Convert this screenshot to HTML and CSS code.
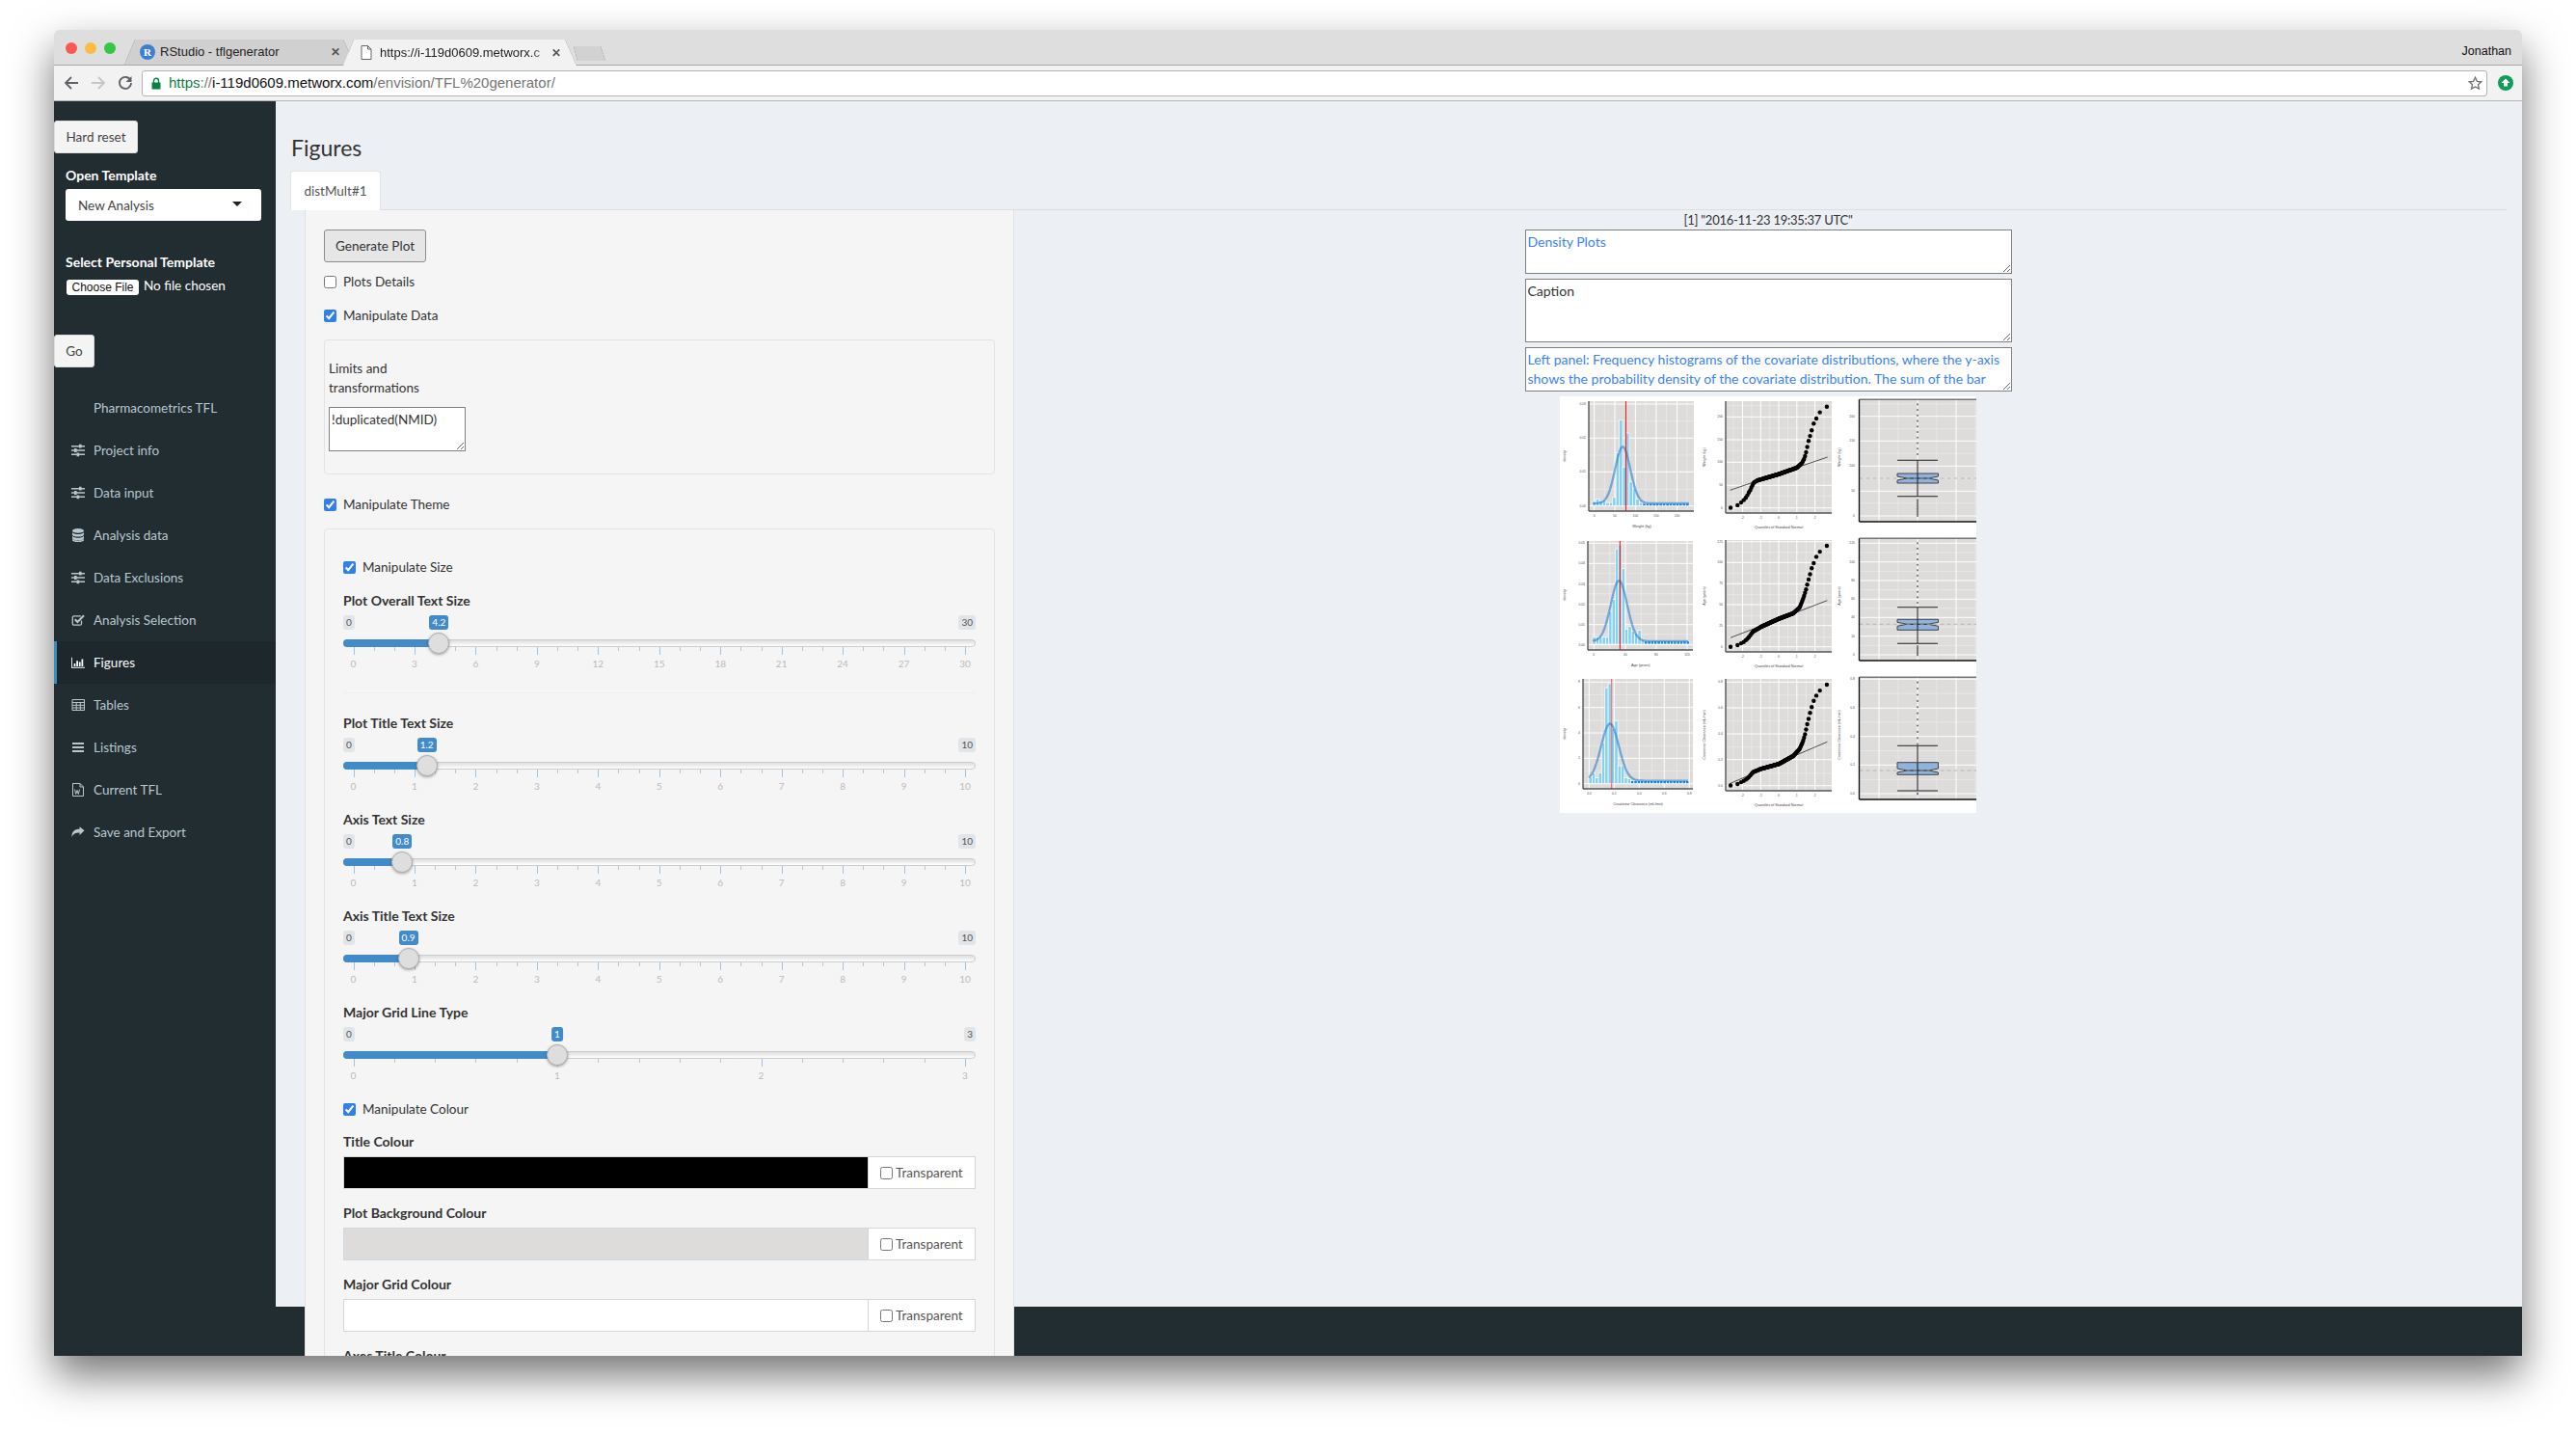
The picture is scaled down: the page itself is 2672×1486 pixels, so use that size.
FILE: index.html
```html
<!DOCTYPE html>
<html lang="en">
<head>
    <meta charset="UTF-8">
    <title>TFL generator</title>
    <link rel="stylesheet" href="styles.css">
</head>
<body>
    <svg class="icon-defs" width="0" height="0">
        <symbol id="i-sliders" viewBox="0 0 14 14"><path d="M0 2h14v1.4H0zM0 6.3h14v1.4H0zM0 10.6h14v1.4H0z"/><path d="M8 .8h2.6v3.8H8zM3 5.1h2.6v3.8H3zM5.6 9.4h2.6v3.8H5.6z"/></symbol>
        <symbol id="i-database" viewBox="0 0 14 14"><ellipse cx="7" cy="2.4" rx="6" ry="2.3"/><path d="M1 4c1 1.5 3.300 2 6 2s5-.5 6-2v2.300C13 7.800 10.300 8.600 7 8.600S1 7.800 1 6.300zM1 7.700c1 1.500 3.300 2 6 2s5-.5 6-2v2.200c0 1.500-2.700 2.300-6 2.300s-6-.8-6-2.300zM1 11c1 1.200 3.300 1.700 6 1.700s5-.5 6-1.700v.9c0 1.500-2.700 2.100-6 2.100s-6-.6-6-2.100z"/></symbol>
        <symbol id="i-check" viewBox="0 0 14 14"><path d="M10.500 7.500v3.200a1.500 1.500 0 0 1-1.500 1.500H2.800a1.500 1.500 0 0 1-1.500-1.500V4.300a1.500 1.500 0 0 1 1.500-1.500h7" fill="none" stroke="currentColor" stroke-width="1.300"/><path d="M3.700 6.200l2.700 2.800L13 2.200" fill="none" stroke="currentColor" stroke-width="2"/></symbol>
        <symbol id="i-chart" viewBox="0 0 16 14"><path d="M0 1h1v11.500h16V13.500H0z"/><path d="M3 8h2v3.500H3zM6 5h2v6.500H6zM9 6.500h2v5H9zM12 3h2v8.500h-2z"/></symbol>
        <symbol id="i-table" viewBox="0 0 14 14"><path d="M1 1.500h12.500v11H1z" fill="none" stroke="currentColor"/><path d="M1 4.500h12.500M1 7.300h12.500M1 10h12.500M5.200 4.500v8M9.300 4.500v8" fill="none" stroke="currentColor"/></symbol>
        <symbol id="i-bars" viewBox="0 0 14 14"><path d="M1 2h12v2H1zM1 6h12v2H1zM1 10h12v2H1z"/></symbol>
        <symbol id="i-word" viewBox="0 0 14 14"><path d="M1.500.5h7.500l3.500 3.500v9.500h-11zM9 .5V4h3.500" fill="none" stroke="currentColor"/><path d="M3.500 6.500l1.200 5 1.300-4 1.300 4 1.200-5" fill="none" stroke="currentColor"/></symbol>
        <symbol id="i-share" viewBox="0 0 15 14"><path d="M14.500 5.200L9.200.8v2.700C3.500 3.500.5 6 .5 12.500c1.500-3.500 4-5 8.700-5v2.600z"/></symbol>
    </svg>

    <div class="window">
        <div class="tabstrip">
            <div class="lights">
                <span class="light red"></span>
                <span class="light yellow"></span>
                <span class="light green"></span>
            </div>
            <div class="browser-tabs">
                <div class="browser-tab">
                    <span class="favicon">R</span>
                    <span class="tab-title">RStudio - tflgenerator</span>
                    <span class="tab-close">&#10005;</span>
                </div>
                <div class="browser-tab active">
                    <svg class="page-icon" width="12" height="15" viewBox="0 0 12 15"><path d="M1 .5h6.500l3.500 3.500v10.500H1zM7.500.5V4H11" fill="#fff" stroke="#666"/></svg>
                    <span class="tab-title faded">https://i-119d0609.metworx.c</span>
                    <span class="tab-close">&#10005;</span>
                </div>
                <div class="new-tab"></div>
            </div>
            <div class="profile">Jonathan</div>
        </div>

        <div class="toolbar">
            <svg class="nav-icon" width="16" height="16" viewBox="0 0 16 16"><path d="M15 8H2.500M8 2L2 8l6 6" fill="none" stroke="#5f6368" stroke-width="1.800"/></svg>
            <svg class="nav-icon" width="16" height="16" viewBox="0 0 16 16"><path d="M1 8h12.500M8 2l6 6-6 6" fill="none" stroke="#c6c6c6" stroke-width="1.800"/></svg>
            <svg class="nav-icon" width="16" height="16" viewBox="0 0 16 16"><path d="M13.500 5.500A6 6 0 1 0 14 8" fill="none" stroke="#5f6368" stroke-width="1.800"/><path d="M14.500 1v6h-6z" fill="#5f6368"/></svg>
            <div class="omnibox">
                <svg class="lock" width="10" height="13" viewBox="0 0 10 13"><path d="M2.500 6V3.800a2.500 2.500 0 0 1 5 0V6" fill="none" stroke="#0b8043" stroke-width="1.400"/><path d="M.5 5.500h9v7h-9z" fill="#0b8043"/></svg>
                <span class="url"><span class="url-scheme">https</span><span class="url-dim">://</span><span class="url-host">i-119d0609.metworx.com</span><span class="url-dim">/envision/TFL%20generator/</span></span>
                <svg class="star" width="15" height="15" viewBox="0 0 15 15"><path d="M7.500 1.300l1.900 4 4.300.5-3.200 3 .9 4.300-3.900-2.200-3.900 2.200.9-4.300-3.200-3 4.300-.5z" fill="none" stroke="#6e6e6e" stroke-width="1.300"/></svg>
            </div>
            <svg class="update" width="16" height="16" viewBox="0 0 16 16"><circle cx="8" cy="8" r="8" fill="#0f9d58"/><path d="M8 3.500L12.500 8H10v3.500H6V8H3.500z" fill="#fff"/></svg>
        </div>

        <div class="app">
            <aside class="sidebar">
                <button class="side-btn reset">Hard reset</button>
                <div class="side-label first">Open Template</div>
                <div class="side-select">New Analysis<span class="caret"></span></div>
                <div class="side-label second">Select Personal Template</div>
                <div class="file-row">
                    <span class="file-btn">Choose File</span>
                    <span class="file-text">No file chosen</span>
                </div>
                <button class="side-btn go">Go</button>

                <ul class="menu">
                    <li><span class="menu-icon"></span>Pharmacometrics TFL</li>
                    <li><svg class="menu-icon"><use href="#i-sliders"/></svg>Project info</li>
                    <li><svg class="menu-icon"><use href="#i-sliders"/></svg>Data input</li>
                    <li><svg class="menu-icon"><use href="#i-database"/></svg>Analysis data</li>
                    <li><svg class="menu-icon"><use href="#i-sliders"/></svg>Data Exclusions</li>
                    <li><svg class="menu-icon"><use href="#i-check"/></svg>Analysis Selection</li>
                    <li class="active"><svg class="menu-icon"><use href="#i-chart"/></svg>Figures</li>
                    <li><svg class="menu-icon"><use href="#i-table"/></svg>Tables</li>
                    <li><svg class="menu-icon"><use href="#i-bars"/></svg>Listings</li>
                    <li><svg class="menu-icon"><use href="#i-word"/></svg>Current TFL</li>
                    <li><svg class="menu-icon"><use href="#i-share"/></svg>Save and Export</li>
                </ul>
            </aside>

            <main class="main">
                <h1>Figures</h1>
                <div class="nav-tabs">
                    <div class="nav-tab">distMult#1</div>
                </div>

                <div class="tab-content">
                    <div class="well">
                        <button class="generate">Generate Plot</button>
                        <label class="check first-check"><input type="checkbox">Plots Details</label>
                        <label class="check"><input type="checkbox" checked>Manipulate Data</label>

                        <div class="inner-well data-well">
                            <div class="limits-label">Limits and transformations</div>
                            <textarea class="limits-input">!duplicated(NMID)</textarea>
                        </div>

                        <label class="check theme-check"><input type="checkbox" checked>Manipulate Theme</label>

                        <div class="inner-well theme-well">
                            <label class="check"><input type="checkbox" checked>Manipulate Size</label>

                            <div class="field-label size-first">Plot Overall Text Size</div>
                            <div class="slider" data-max="30" data-from="4.2" data-major="3" data-sub="3"></div>
                            <hr>
                            <div class="field-label">Plot Title Text Size</div>
                            <div class="slider" data-max="10" data-from="1.2" data-major="1" data-sub="3"></div>
                            <div class="field-label">Axis Text Size</div>
                            <div class="slider" data-max="10" data-from="0.8" data-major="1" data-sub="3"></div>
                            <div class="field-label">Axis Title Text Size</div>
                            <div class="slider" data-max="10" data-from="0.9" data-major="1" data-sub="3"></div>
                            <div class="field-label">Major Grid Line Type</div>
                            <div class="slider" data-max="3" data-from="1" data-major="1" data-sub="5"></div>

                            <label class="check"><input type="checkbox" checked>Manipulate Colour</label>

                            <div class="field-label colour-first">Title Colour</div>
                            <div class="colour-input">
                                <div class="swatch black"></div>
                                <label class="addon"><input type="checkbox">Transparent</label>
                            </div>
                            <div class="field-label">Plot Background Colour</div>
                            <div class="colour-input">
                                <div class="swatch grey"></div>
                                <label class="addon"><input type="checkbox">Transparent</label>
                            </div>
                            <div class="field-label">Major Grid Colour</div>
                            <div class="colour-input">
                                <div class="swatch"></div>
                                <label class="addon"><input type="checkbox">Transparent</label>
                            </div>
                            <div class="field-label">Axes Title Colour</div>
                        </div>
                    </div>

                    <div class="results">
                        <div class="timestamp">[1] "2016-11-23 19:35:37 UTC"</div>
                        <textarea class="plot-text title blue">Density Plots</textarea>
                        <textarea class="plot-text caption">Caption</textarea>
                        <textarea class="plot-text footnote blue">Left panel: Frequency histograms of the covariate distributions, where the y-axis shows the probability density of the covariate distribution. The sum of the bar areas equals one.</textarea>
                        <div class="plot-grid" id="plot-grid"></div>
                    </div>
                </div>

                <div class="footer"></div>
            </main>
        </div>
    </div>

    <script src="plots.js"></script>
</body>
</html>
```

FILE: styles.css
```css
html, body {
    margin: 0;
    height: 100%;
    overflow: hidden;
}
body {
    box-sizing: border-box;
    padding: 31px 56px 80px;
    background-color: #fff;
    font-family: 'Lato', sans-serif;
    font-size: 13.5px;
    line-height: 20px;
    color: #333;
}
button, textarea {
    font-family: inherit;
}
.icon-defs {
    position: absolute;
}
.window {
    height: 1375px;
    display: flex;
    flex-direction: column;
    border-radius: 6px 6px 0 0;
    overflow: hidden;
    box-shadow: 0 20px 44px rgba(0, 0, 0, 0.55);
}

/* browser chrome */
.tabstrip {
    flex: none;
    box-sizing: border-box;
    height: 37px;
    padding: 10px 11px 0 12px;
    display: flex;
    align-items: stretch;
    background-color: #dedede;
    border-bottom: 1px solid #a9a9a9;
    font-family: 'Liberation Sans', sans-serif;
    font-size: 13px;
    color: #222;
}
.lights {
    display: flex;
    gap: 8px;
    margin: 3px 9px 0 0;
}
.light {
    width: 12px;
    height: 12px;
    border-radius: 50%;
}
.light.red { background-color: #fc5753; }
.light.yellow { background-color: #fdbc40; }
.light.green { background-color: #33c748; }
.browser-tabs {
    display: flex;
    filter: drop-shadow(0 0 0.6px #666);
}
.browser-tab {
    width: 239px;
    box-sizing: border-box;
    padding: 0 15px 0 16px;
    display: flex;
    align-items: center;
    background-color: #d0d0d0;
    clip-path: polygon(0 100%, 11px 0, calc(100% - 12px) 0, 100% 100%);
}
.browser-tab.active {
    position: relative;
    width: 242px;
    height: 27px;
    margin-left: -12px;
    padding: 0 16px 0 18px;
    background-color: #f2f2f2;
}
.favicon {
    width: 16px;
    height: 16px;
    margin-right: 5px;
    flex: none;
    border-radius: 50%;
    background-color: #3f7fd0;
    color: #fff;
    font-family: 'Liberation Serif', serif;
    font-size: 11px;
    font-weight: bold;
    line-height: 16px;
    text-align: center;
}
.page-icon {
    flex: none;
    margin-right: 8px;
}
.tab-title {
    flex: 1;
    white-space: nowrap;
}
.tab-title.faded {
    -webkit-mask-image: linear-gradient(to right, #000 88%, transparent);
    mask-image: linear-gradient(to right, #000 88%, transparent);
}
.tab-close {
    flex: none;
    font-size: 12px;
    font-weight: bold;
    color: #555;
}
.new-tab {
    width: 33px;
    height: 15px;
    margin: 7px 0 0 -3px;
    background-color: #d2d2d2;
    clip-path: polygon(0 0, 85% 0, 100% 100%, 12% 100%);
}
.profile {
    margin-left: auto;
    padding-top: 2px;
    font-size: 12.5px;
    color: #111;
}
.toolbar {
    flex: none;
    box-sizing: border-box;
    height: 37px;
    padding: 5px 9px 5px 10px;
    display: flex;
    align-items: center;
    background-color: #f2f2f2;
    border-bottom: 1px solid #b5b5b5;
}
.nav-icon {
    flex: none;
    margin-right: 12px;
}
.omnibox {
    flex: 1;
    height: 27px;
    margin-right: 11px;
    margin-left: -3px;
    box-sizing: border-box;
    padding: 0 4px 0 9px;
    display: flex;
    align-items: center;
    background-color: #fff;
    border: 1px solid #b4b4b4;
    border-radius: 3px;
    font-family: 'Liberation Sans', sans-serif;
    font-size: 15px;
}
.lock {
    margin-right: 8px;
}
.url {
    flex: 1;
}
.url-scheme { color: #0b8043; }
.url-dim { color: #757575; }
.url-host { color: #111; }
.update {
    flex: none;
}

/* app layout */
.app {
    flex: 1;
    min-height: 0;
    display: flex;
}
.sidebar {
    flex: none;
    width: 230px;
    background-color: #222d32;
    color: #fff;
}
.side-btn {
    display: block;
    box-sizing: border-box;
    height: 34px;
    margin-top: 20px;
    padding: 0;
    background-color: #f4f4f4;
    border: 1px solid #ddd;
    border-radius: 3px;
    font-size: 13.5px;
    color: #444;
}
.side-btn.reset {
    width: 87px;
}
.side-btn.go {
    width: 42px;
    margin-top: 41px;
}
.side-label {
    padding-left: 12px;
    font-size: 14px;
    font-weight: bold;
}
.side-label.first {
    margin-top: 13px;
}
.side-label.second {
    margin-top: 33px;
}
.side-select {
    position: relative;
    box-sizing: border-box;
    width: 203px;
    height: 33px;
    margin: 4px 0 0 12px;
    padding: 7px 13px;
    background-color: #fff;
    border-radius: 3px;
    color: #444;
}
.caret {
    position: absolute;
    top: 13px;
    right: 20px;
    border-top: 5px solid #222;
    border-left: 5px solid transparent;
    border-right: 5px solid transparent;
}
.file-row {
    margin: 8px 0 0 13px;
    display: flex;
    align-items: center;
    height: 16px;
}
.file-btn {
    width: 75px;
    height: 16px;
    background-color: #fff;
    border-radius: 3px;
    font-family: 'Liberation Sans', sans-serif;
    font-size: 12px;
    line-height: 17px;
    color: #111;
    text-align: center;
}
.file-text {
    margin: -5px 0 0 5px;
}
.menu {
    list-style: none;
    margin: 20px 0 0;
    padding: 0;
}
.menu li {
    box-sizing: border-box;
    height: 44px;
    padding-left: 15px;
    display: flex;
    align-items: center;
    border-left: 3px solid transparent;
    color: #b8c7ce;
}
.menu li.active {
    background-color: #1e282c;
    border-left-color: #3c8dbc;
    color: #fff;
}
.menu-icon {
    flex: none;
    width: 14px;
    height: 14px;
    margin-right: 9px;
    fill: currentColor;
    overflow: visible;
}
.main {
    position: relative;
    flex: 1;
    min-width: 0;
    padding-left: 15px;
    background-color: #ecf0f5;
}
.main h1 {
    margin: 36px 0 12px 1px;
    font-size: 23px;
    font-weight: normal;
    line-height: 24px;
}
.nav-tabs {
    box-sizing: border-box;
    height: 41px;
    margin-right: 16px;
    border-bottom: 1px solid #ddd;
}
.nav-tab {
    box-sizing: border-box;
    width: 94px;
    height: 41px;
    background-color: #fff;
    border: 1px solid #e4e4e4;
    border-bottom: none;
    border-radius: 4px 4px 0 0;
    color: #555;
    line-height: 40px;
    text-align: center;
}
.tab-content {
    position: relative;
    z-index: 1;
    display: flex;
    align-items: flex-start;
}
.footer {
    position: absolute;
    left: 0;
    right: 0;
    bottom: 0;
    height: 51px;
    background-color: #222d32;
}

/* left panel */
.well {
    flex: none;
    box-sizing: border-box;
    width: 736px;
    margin-left: 15px;
    padding: 20px 19px;
    background-color: #f5f5f5;
    border: 1px solid #e3e3e3;
    border-top: none;
}
.generate {
    display: block;
    box-sizing: border-box;
    width: 106px;
    height: 34px;
    padding: 0;
    background-color: #e6e6e6;
    border: 1px solid #8c8c8c;
    border-radius: 3px;
    font-size: 13.5px;
    color: #333;
}
.check {
    display: flex;
    align-items: center;
    height: 20px;
    margin-top: 15px;
}
.check input {
    width: 13px;
    height: 13px;
    margin: 0 7px 0 0;
    accent-color: #2f80ed;
}
.check.first-check {
    margin-top: 10px;
}
.check.theme-check {
    margin-top: 21px;
}
.inner-well {
    border: 1px solid #e3e3e3;
    border-radius: 4px;
    background-color: #f5f5f5;
}
.data-well {
    box-sizing: border-box;
    height: 140px;
    margin-top: 15px;
    padding: 19px 4px;
}
.limits-label {
    width: 140px;
    margin-bottom: 10px;
}
.limits-input {
    display: block;
    box-sizing: border-box;
    width: 142px;
    height: 46px;
    padding: 4px 2px 2px;
    border: 1px solid #808080;
    font-size: 13.5px;
    color: #333;
}
.theme-well {
    margin-top: 15px;
    padding: 29px 19px 40px;
}
.theme-well .check {
    margin-top: 0;
}
.field-label {
    height: 20px;
    font-size: 14px;
    font-weight: bold;
    color: #333;
}
.size-first {
    margin-top: 15px;
}
.theme-well hr {
    margin: 15px 0 21px;
    border: none;
    border-top: 1px solid #eee;
}
.slider {
    position: relative;
    height: 67px;
    margin: 3px 0 10px;
}
.irs-label {
    position: absolute;
    top: 2px;
    padding: 0 3px;
    height: 15px;
    background-color: #e1e4e9;
    border-radius: 3px;
    font-size: 10px;
    line-height: 15px;
    color: #555;
}
.irs-label.value {
    transform: translateX(-50%);
    background-color: #428bca;
    color: #fff;
}
.irs-line {
    position: absolute;
    top: 27px;
    left: 0;
    right: 0;
    height: 8px;
    box-sizing: border-box;
    background: linear-gradient(to bottom, #ddd, #fff);
    border: 1px solid #ccc;
    border-radius: 4px;
}
.irs-bar {
    position: absolute;
    top: 27px;
    left: 0;
    height: 8px;
    background-color: #428bca;
    border-radius: 4px 0 0 4px;
}
.irs-handle {
    position: absolute;
    top: 20px;
    width: 22px;
    height: 22px;
    box-sizing: border-box;
    transform: translateX(-50%);
    background-color: #dedede;
    border: 1px solid #b0b0b0;
    border-radius: 50%;
    box-shadow: 0 1px 3px rgba(0, 0, 0, 0.35);
}
.irs-tick {
    position: absolute;
    top: 35px;
    width: 1px;
    height: 4px;
    background-color: #c4c4c4;
}
.irs-tick.major {
    height: 8px;
    background-color: #9fc4e4;
}
.irs-num {
    position: absolute;
    top: 45px;
    transform: translateX(-50%);
    font-size: 10px;
    line-height: 14px;
    color: #bbb;
}
.field-label.colour-first {
    margin-top: 14px;
}
.colour-input {
    display: flex;
    box-sizing: border-box;
    height: 34px;
    margin: 5px 0 15px;
    border: 1px solid #d2d6de;
    background-color: #fff;
}
.swatch {
    flex: 1;
    border-right: 1px solid #d2d6de;
}
.swatch.black { background-color: #000; }
.swatch.grey { background-color: #dedbdb; }
.addon {
    flex: none;
    box-sizing: border-box;
    width: 110px;
    padding-left: 12px;
    display: flex;
    align-items: center;
    color: #555;
}
.addon input {
    width: 13px;
    height: 13px;
    margin: 0 3px 0 0;
}

/* right panel */
.results {
    flex: 1;
    min-width: 0;
    display: flex;
    flex-direction: column;
    align-items: center;
}
.timestamp {
    font-size: 13px;
    letter-spacing: -0.25px;
}
.plot-text {
    display: block;
    flex: none;
    box-sizing: border-box;
    width: 505px;
    height: 46px;
    margin-bottom: 5px;
    padding: 2px;
    border: 1px solid #808080;
    overflow: hidden;
    font-size: 14px;
    line-height: 20px;
    color: #333;
}
.plot-text.caption {
    height: 66px;
}
.plot-text.blue {
    color: #3b82f6;
}
.plot-grid {
    display: grid;
    grid-template-columns: repeat(3, 144px);
    grid-auto-rows: 144px;
    background-color: #fff;
}
.plot-grid svg {
    display: block;
    font-family: 'Liberation Sans', sans-serif;
}
.plot-bg { fill: #dedbdb; }
.grid-major { stroke: #fff; stroke-width: 1; }
.grid-minor { stroke: #f0eeee; stroke-width: 0.6; }
.axis-line { stroke: #555; stroke-width: 1.4; }
.tick-text { font-size: 3.4px; fill: #555; }
.title-text { font-size: 3.8px; fill: #444; }
.bar { fill: rgba(125, 206, 240, 0.9); stroke: #fff; stroke-width: 0.7; }
.bar.tail { fill: #1b86d6; }
.density { fill: none; stroke: #1b75c9; stroke-width: 2.3; }
.density.front { stroke-opacity: 0.55; }
.mean-line { stroke: #f00; stroke-width: 1; }
.qq-dot { fill: #000; }
.qq-line { stroke: #111; stroke-width: 0.7; }
.box-frame { stroke: #111; stroke-width: 1.4; }
.box-frame.light { stroke: #777; }
.box-body { fill: #8fb3dc; stroke: #444; stroke-width: 1; }
.whisker { stroke: #222; stroke-width: 1.1; }
.ref-line { stroke: #aaa; stroke-width: 0.8; stroke-dasharray: 4 3; }
.outlier { fill: #777; }
```

FILE: plots.js
```js
// Range sliders: ticks and handles come from the data- attributes
const TRACK_START = 10.5;
const TRACK_SPAN = 634.5;

function sliderX(value, max) {
    return TRACK_START + value / max * TRACK_SPAN;
}

function addEl(parent, className, text, left) {
    const el = document.createElement('div');
    el.className = className;
    if (text !== undefined) el.textContent = text;
    if (left !== undefined) el.style.left = left + 'px';
    parent.appendChild(el);
    return el;
}

document.querySelectorAll('.slider').forEach(slider => {
    const max = Number(slider.dataset.max);
    const from = Number(slider.dataset.from);
    const major = Number(slider.dataset.major);
    const sub = Number(slider.dataset.sub);
    const x = sliderX(from, max);

    addEl(slider, 'irs-line');
    addEl(slider, 'irs-bar').style.width = x + 'px';
    addEl(slider, 'irs-label', '0', 0);
    addEl(slider, 'irs-label', max).style.right = 0;
    addEl(slider, 'irs-label value', from, x);

    for (let v = 0; v <= max; v += major) {
        addEl(slider, 'irs-tick major', undefined, sliderX(v, max));
        addEl(slider, 'irs-num', v, sliderX(v, max));
        if (v === max) break;
        for (let i = 1; i < sub; i++) {
            addEl(slider, 'irs-tick', undefined, sliderX(v + major * i / sub, max));
        }
    }
    addEl(slider, 'irs-handle', undefined, x);
});

// Plot data, in pixels of each 144px cell
const QQ_TITLE = 'Quantiles of Standard Normal';

const rows = [
    {
        name: 'Weight (kg)',
        hist: {
            left: 30, right: 139, top: 5, bottom: 119, base: 113.7, max: 24.7,
            xTicks: [[35.6, '0'], [57, '50'], [78.4, '100'], [99.9, '150'], [121.6, '200']],
            yTicks: [[8, '0.03'], [43.3, '0.02'], [78.3, '0.01'], [113.7, '0.00']],
            barStart: 34, barWidth: 3.45,
            bars: [.05, .08, .06, .07, .04, .04, .1, .62, 1, .45, .85, .28, .2, .08, .04],
            mu: 65.2, sigma: 7.9, peak: .66, mean: 68.4, meanOpacity: 1, titleX: 85
        },
        qq: {
            yTicks: [[115.7, '0'], [92.3, '50'], [68.3, '100'], [45, '150'], [21.3, '200']],
            line: [32.6, 97.3, 133.7, 63],
            points: [[32.6, 115.7], [40.1, 113], [45.5, 109], [49.8, 104], [53.4, 97.3], [56.9, 89.7], [60.5, 87.3], [69.4, 84.7], [83, 80.7], [101.9, 74], [107.3, 69], [109.8, 64], [111.6, 57.3], [114.1, 45.7], [115.9, 39.7], [117.6, 34], [119.4, 28], [122.3, 22.3], [125.9, 16.3], [133, 10.7]]
        },
        box: {
            yTicks: [[124, '0'], [98.3, '50'], [72.3, '100'], [46.3, '150'], [20.7, '200']],
            top: 80, bottom: 90, notch: 85, capTop: 66.3, capBottom: 103.7,
            high: [8.3, 60, 10], low: [107.3, 124, 12]
        }
    },
    {
        name: 'Age (years)',
        hist: {
            left: 29, right: 138, top: 6, bottom: 119, base: 113, max: 10,
            xTicks: [[35.3, '0'], [68, '40'], [100, '80'], [132, '120']],
            yTicks: [[8.3, '0.05'], [29.3, '0.04'], [50.7, '0.03'], [71.7, '0.02'], [92.7, '0.01'], [113.7, '0.00']],
            barStart: 34, barWidth: 3.35,
            bars: [.07, .07, .07, .07, .07, .33, .45, .96, 1, .76, .15, .18, .13, .11, .14, .05],
            mu: 61.3, sigma: 8.5, peak: .61, mean: 62.3, meanOpacity: 1, titleX: 83.7
        },
        qq: {
            yTicks: [[115.7, '0'], [93.7, '25'], [72, '50'], [50.3, '75'], [28.3, '100'], [6.7, '125']],
            line: [33, 106.3, 133.3, 67.7],
            points: [[33, 115.7], [40.3, 114], [46.3, 111], [51.3, 106.7], [56.3, 100], [64.7, 95], [83, 86.7], [98, 81], [104.7, 75], [108.7, 65], [111.3, 56.7], [114, 45.7], [117.3, 34], [122, 22.3], [126, 16.7], [133.3, 10.7]]
        },
        box: {
            yTicks: [[124, '0'], [104.7, '20'], [85.3, '40'], [66.3, '60'], [47, '80'], [27.7, '100'], [8.3, '120']],
            top: 87.3, bottom: 98.3, notch: 92.3, capTop: 74.7, capBottom: 112.3,
            high: [8.3, 70, 12], low: [115, 124.3, 8]
        }
    },
    {
        name: 'Creatinine Clearance (mL/min)',
        hist: {
            left: 24, right: 138, top: 5, bottom: 119, base: 113.7, max: 10,
            xTicks: [[30.3, '0.0'], [56.3, '0.2'], [82.3, '0.4'], [108.3, '0.6'], [134.3, '0.8']],
            yTicks: [[8.3, '8'], [34.7, '6'], [61, '4'], [87.3, '2'], [113.7, '0']],
            barStart: 30, barWidth: 3.35,
            bars: [.07, .11, .06, .11, .41, .96, 1, .55, .63, .18, .18, .06, .05],
            mu: 52, sigma: 9.2, peak: .57, mean: 53.7, meanOpacity: .6, titleX: 81
        },
        qq: {
            yTicks: [[115.7, '0.0'], [88.7, '0.2'], [62, '0.4'], [35, '0.6'], [8.3, '0.8']],
            line: [32, 113.7, 133.3, 70.3],
            points: [[32, 115.7], [39.7, 114.3], [46.3, 111], [51.3, 107.7], [56.3, 101.7], [64.7, 98.3], [83, 93.3], [98, 85], [104.7, 77.7], [108, 70.3], [110.3, 62.7], [112.7, 51.7], [115.7, 39.3], [119, 28.3], [122, 22.3], [126, 16.7], [133.3, 10.7]]
        },
        box: {
            yTicks: [[124, '0.0'], [94.3, '0.2'], [64.7, '0.4'], [35.3, '0.6'], [5.3, '0.8']],
            top: 91.7, bottom: 104.3, notch: 100, capTop: 74.3, capBottom: 121,
            high: [8.7, 72.7, 11], low: [123.7, 124.5, 2]
        }
    }
];

function line(x1, y1, x2, y2, cls) {
    return `<line x1="${x1}" y1="${y1}" x2="${x2}" y2="${y2}" class="${cls}"/>`;
}

function text(x, y, str, cls, anchor, rotate) {
    const turn = rotate ? ` transform="rotate(-90 ${x} ${y})"` : '';
    return `<text x="${x}" y="${y}" class="${cls}" text-anchor="${anchor}"${turn}>${str}</text>`;
}

// White grid with a fainter line half way between the major ones
function grid(p, xs, ys) {
    let out = `<rect x="${p.left}" y="${p.top}" width="${p.right - p.left}" height="${p.bottom - p.top}" class="plot-bg"/>`;
    const minorsOf = (values, lo, hi) => {
        const step = Math.abs(values[1] - values[0]);
        const from = Math.min(...values);
        const result = [];
        for (let v = from - step * 5.5; v < hi; v += step) {
            if (v > lo) result.push(v);
        }
        return result;
    };
    minorsOf(xs, p.left, p.right).forEach(x => { out += line(x, p.top, x, p.bottom, 'grid-minor'); });
    minorsOf(ys, p.top, p.bottom).forEach(y => { out += line(p.left, y, p.right, y, 'grid-minor'); });
    xs.forEach(x => { out += line(x, p.top, x, p.bottom, 'grid-major'); });
    ys.forEach(y => { out += line(p.left, y, p.right, y, 'grid-major'); });
    return out;
}

function histogram(row) {
    const h = row.hist;
    let out = grid(h, h.xTicks.map(t => t[0]), h.yTicks.map(t => t[0]));
    const height = h.base - h.max;

    let path = '';
    for (let x = h.barStart; x <= h.right - 5; x += 1) {
        const d = (x - h.mu) / h.sigma;
        const y = h.base - height * (h.peak * Math.exp(-d * d / 2) + .03);
        path += (path ? 'L' : 'M') + x + ' ' + y.toFixed(1);
    }

    const count = Math.round((h.right - 5 - h.barStart) / h.barWidth);
    for (let i = 0; i < count; i++) {
        const isTail = i >= h.bars.length;
        const barH = (isTail ? .03 : h.bars[i]) * height;
        out += `<rect x="${h.barStart + i * h.barWidth}" y="${h.base - barH}" width="${h.barWidth}" height="${barH}" class="bar${isTail ? ' tail' : ''}"/>`;
    }
    // curve shows through the white bar edges on the way over the bars
    out += `<path d="${path}" class="density front"/>`;
    out += `<line x1="${h.mean}" y1="${h.top}" x2="${h.mean}" y2="${h.bottom}" class="mean-line" opacity="${h.meanOpacity}"/>`;
    out += line(h.left, h.top, h.left, h.bottom, 'axis-line') + line(h.left, h.bottom, h.right, h.bottom, 'axis-line');

    h.xTicks.forEach(t => { out += text(t[0], 125, t[1], 'tick-text', 'middle'); });
    h.yTicks.forEach(t => { out += text(h.left - 3, t[0] + 1, t[1], 'tick-text', 'end'); });
    out += text(h.titleX, 135.5, row.name, 'title-text', 'middle');
    out += text(6, 62, 'density', 'title-text', 'middle', true);
    return out;
}

// Tukey approximation of the normal quantile
function quantile(p) {
    return 4.91 * (Math.pow(p, .14) - Math.pow(1 - p, .14));
}

function interpolate(points, x) {
    for (let i = 1; i < points.length; i++) {
        if (x <= points[i][0]) {
            const a = points[i - 1];
            const b = points[i];
            return a[1] + (b[1] - a[1]) * (x - a[0]) / (b[0] - a[0]);
        }
    }
    return points[points.length - 1][1];
}

function qqPlot(row) {
    const q = row.qq;
    const p = { left: 28, right: 138, top: 5, bottom: 121 };
    const xTicks = [[45.5, '-2'], [64.3, '-1'], [83, '0'], [101.8, '1'], [120.6, '2']];
    let out = grid(p, xTicks.map(t => t[0]), q.yTicks.map(t => t[0]));

    const n = 130;
    for (let i = 0; i < n; i++) {
        const x = 83 + 18.8 * quantile((i + .5) / n);
        out += `<circle cx="${x.toFixed(1)}" cy="${interpolate(q.points, x).toFixed(1)}" r="2.2" class="qq-dot"/>`;
    }
    out += line(q.line[0], q.line[1], q.line[2], q.line[3], 'qq-line');
    out += line(p.left, p.top, p.left, p.bottom, 'axis-line') + line(p.left, p.bottom, p.right, p.bottom, 'axis-line');

    xTicks.forEach(t => { out += text(t[0], 127, t[1], 'tick-text', 'middle'); });
    q.yTicks.forEach(t => { out += text(p.left - 3, t[0] + 1, t[1], 'tick-text', 'end'); });
    out += text(83, 137, QQ_TITLE, 'title-text', 'middle');
    out += text(7, 63, row.name, 'title-text', 'middle', true);
    return out;
}

function dotRange(range) {
    const [from, to, count] = range;
    let out = '';
    for (let i = 0; i < count; i++) {
        out += `<circle cx="83" cy="${from + (to - from) * i / (count - 1)}" r="1.1" class="outlier"/>`;
    }
    return out;
}

function boxPlot(row) {
    const b = row.box;
    const p = { left: 22.5, right: 144, top: 3.3, bottom: 130 };
    let out = grid(p, [43, 83, 123], b.yTicks.map(t => t[0]));

    out += dotRange(b.high) + dotRange(b.low);
    out += line(83, b.capTop, 83, b.capBottom, 'whisker');
    out += line(62, b.capTop, 104, b.capTop, 'whisker') + line(62, b.capBottom, 104, b.capBottom, 'whisker');
    out += `<path d="M62 ${b.top}H104.500V${b.notch - 2}L94 ${b.notch}L104.500 ${b.notch + 2}V${b.bottom}H62V${b.notch + 2}L72 ${b.notch}L62 ${b.notch - 2}Z" class="box-body"/>`;
    out += line(83, b.top, 83, b.bottom, 'whisker');
    out += line(72, b.notch, 94, b.notch, 'whisker');
    out += line(p.left, b.notch, p.right, b.notch, 'ref-line');
    out += line(p.left, p.top, p.right, p.top, 'box-frame light');
    out += line(p.left, p.top, p.left, p.bottom, 'box-frame') + line(p.left, p.bottom, p.right, p.bottom, 'box-frame');

    b.yTicks.forEach(t => { out += text(18, t[0] + 1, t[1], 'tick-text', 'end'); });
    out += text(2.5, 63, row.name, 'title-text', 'middle', true);
    return out;
}

const plotGrid = document.getElementById('plot-grid');
let cells = '';
rows.forEach(row => {
    [histogram, qqPlot, boxPlot].forEach(draw => {
        cells += `<svg width="144" height="144" viewBox="0 0 144 144">${draw(row)}</svg>`;
    });
});
plotGrid.innerHTML = cells;
```
